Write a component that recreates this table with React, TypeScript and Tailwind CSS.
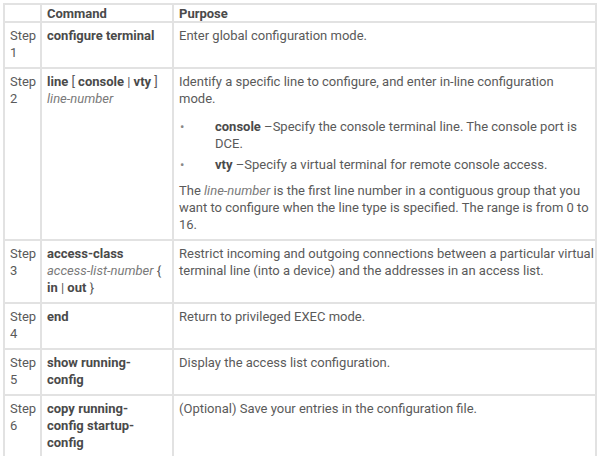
import React from "react";

const cell = "border-2 border-[#e2e2e2] align-top pl-[5px] pr-[4px] pt-[4px] pb-[6px]";
const wide = "border-2 border-[#e2e2e2] align-top pl-[5px] pr-[2px] pt-[4px] pb-[6px] whitespace-nowrap";

const Cmd = ({ children }: { children: React.ReactNode }) => (
  <span className="font-bold text-[#4a4a4a]">{children}</span>
);

const Arg = ({ children }: { children: React.ReactNode }) => (
  <span className="italic text-[#7a7a7a]">{children}</span>
);

const rows: { step: number; cmd: React.ReactNode; purpose: React.ReactNode }[] = [
  {
    step: 1,
    cmd: <Cmd>configure terminal</Cmd>,
    purpose: <p>Enter global configuration mode.</p>,
  },
  {
    step: 2,
    cmd: (
      <>
        <Cmd>line</Cmd> [ <Cmd>console</Cmd> | <Cmd>vty</Cmd> ]
        <br />
        <Arg>line-number</Arg>
      </>
    ),
    purpose: (
      <>
        <p className="mb-[11px]">
          Identify a specific line to configure, and enter in-line configuration
          <br />
          mode.
        </p>
        <ul className="mb-[9px] space-y-[4px]">
          <li className="flex">
            <span className="w-[36px] shrink-0 pl-[1px] text-[#888]">•</span>
            <span>
              <Cmd>console</Cmd> –Specify the console terminal line. The console port is
              <br />
              DCE.
            </span>
          </li>
          <li className="flex">
            <span className="w-[36px] shrink-0 pl-[1px] text-[#888]">•</span>
            <span>
              <Cmd>vty</Cmd> –Specify a virtual terminal for remote console access.
            </span>
          </li>
        </ul>
        <p>
          The <Arg>line-number</Arg> is the first line number in a contiguous group that you
          <br />
          want to configure when the line type is specified. The range is from 0 to
          <br />
          16.
        </p>
      </>
    ),
  },
  {
    step: 3,
    cmd: (
      <>
        <Cmd>access-class</Cmd>
        <br />
        <Arg>access-list-number</Arg> {"{"}
        <br />
        <Cmd>in</Cmd> | <Cmd>out</Cmd> {"}"}
      </>
    ),
    purpose: (
      <p>
        Restrict incoming and outgoing connections between a particular virtual
        <br />
        terminal line (into a device) and the addresses in an access list.
      </p>
    ),
  },
  {
    step: 4,
    cmd: <Cmd>end</Cmd>,
    purpose: <p>Return to privileged EXEC mode.</p>,
  },
  {
    step: 5,
    cmd: (
      <Cmd>
        show running-
        <br />
        config
      </Cmd>
    ),
    purpose: <p>Display the access list configuration.</p>,
  },
  {
    step: 6,
    cmd: (
      <Cmd>
        copy running-
        <br />
        config startup-
        <br />
        config
      </Cmd>
    ),
    purpose: <p>(Optional) Save your entries in the configuration file.</p>,
  },
];

export default function App() {
  return (
    <div className="w-[600px] h-[456px] bg-white p-[3px] font-['Roboto',sans-serif] text-[13px] leading-[17px] text-[#5a5a5a]">
      <table className="w-[594px] border-collapse table-fixed">
        <colgroup>
          <col className="w-[37px]" />
          <col className="w-[132px]" />
          <col />
        </colgroup>
        <thead>
          <tr>
            <th className="border-2 border-[#e2e2e2] h-[18px]" />
            <th className="border-2 border-[#e2e2e2] px-[5px] py-0 text-left font-bold text-[#4a4a4a] leading-[15px]">
              Command
            </th>
            <th className="border-2 border-[#e2e2e2] px-[5px] py-0 text-left font-bold text-[#4a4a4a] leading-[15px]">
              Purpose
            </th>
          </tr>
        </thead>
        <tbody>
          {rows.map((r) => (
            <tr key={r.step}>
              <td className={cell}>
                Step
                <br />
                {r.step}
              </td>
              <td className={cell + " whitespace-nowrap"}>{r.cmd}</td>
              <td className={wide}>{r.purpose}</td>
            </tr>
          ))}
        </tbody>
      </table>
    </div>
  );
}
